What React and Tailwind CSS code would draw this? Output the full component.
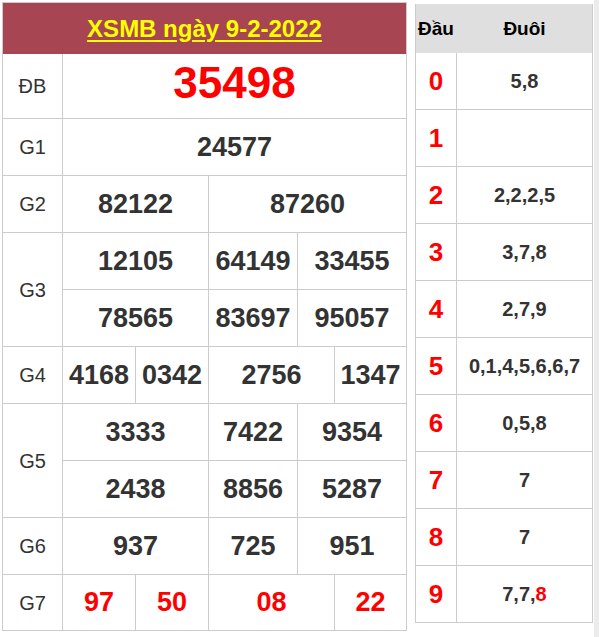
import React from "react";

const C = "bg-white flex items-center justify-center";
const NUM = "text-[27px] font-bold text-[#333] leading-none";
const RED = "text-[27px] font-bold text-[#ff0000] leading-none";
const RED_H = "text-[26px] font-bold text-[#ff0000] leading-none";
const LBL = "text-[20px] text-[#333] leading-none";

function Label({ children, className = "" }) {
  return (
    <div className={`${C} ${className}`}>
      <span className={LBL}>{children}</span>
    </div>
  );
}

function Num({ children, className = "", red = false }) {
  return (
    <div className={`${C} ${className}`}>
      <span className={red ? RED : NUM}>{children}</span>
    </div>
  );
}

const loto = [
  ["0", "5,8"],
  ["1", ""],
  ["2", "2,2,2,5"],
  ["3", "3,7,8"],
  ["4", "2,7,9"],
  ["5", "0,1,4,5,6,6,7"],
  ["6", "0,5,8"],
  ["7", "7"],
  ["8", "7"],
];

export default function App() {
  return (
    <div className="flex w-[599px] h-[637px] bg-white font-['Liberation_Sans',Arial,sans-serif]">
      {/* Left results table */}
      <div className="ml-[2px] mt-[2px] w-[405px] self-start border border-[#cccccc]">
        <div className="h-[51px] bg-[#a84552] flex items-center justify-center">
          <span className="text-[24px] font-bold text-[#ffff00] underline underline-offset-[3px] leading-none">
            XSMB ngày 9-2-2022
          </span>
        </div>
        <div className="grid grid-cols-[59px_72px_72px_88px_36px_71px] grid-rows-[64px_repeat(8,56px)_55px] gap-px bg-[#cccccc]">
          {/* ĐB */}
          <Label>ĐB</Label>
          <div className={`${C} col-span-5 pb-[6px]`}>
            <span className="text-[44px] font-bold text-[#ff0000] leading-none">35498</span>
          </div>
          {/* G1 */}
          <Label>G1</Label>
          <Num className="col-span-5">24577</Num>
          {/* G2 */}
          <Label>G2</Label>
          <Num className="col-span-2">82122</Num>
          <Num className="col-span-3">87260</Num>
          {/* G3 */}
          <Label className="row-span-2">G3</Label>
          <Num className="col-span-2">12105</Num>
          <Num>64149</Num>
          <Num className="col-span-2">33455</Num>
          <Num className="col-span-2">78565</Num>
          <Num>83697</Num>
          <Num className="col-span-2">95057</Num>
          {/* G4 */}
          <Label>G4</Label>
          <Num>4168</Num>
          <Num>0342</Num>
          <Num className="col-span-2">2756</Num>
          <Num>1347</Num>
          {/* G5 */}
          <Label className="row-span-2">G5</Label>
          <Num className="col-span-2">3333</Num>
          <Num>7422</Num>
          <Num className="col-span-2">9354</Num>
          <Num className="col-span-2">2438</Num>
          <Num>8856</Num>
          <Num className="col-span-2">5287</Num>
          {/* G6 */}
          <Label>G6</Label>
          <Num className="col-span-2">937</Num>
          <Num>725</Num>
          <Num className="col-span-2">951</Num>
          {/* G7 */}
          <Label>G7</Label>
          <Num red>97</Num>
          <Num red>50</Num>
          <Num red className="col-span-2">08</Num>
          <Num red>22</Num>
        </div>
      </div>

      {/* Right loto table */}
      <div className="ml-[8px] mt-[4px] w-[178px] self-start border-x border-b border-[#cccccc]">
        <div className="h-[49px] bg-[#dfdfdf] grid grid-cols-[40px_135px] gap-px items-center">
          <span className="text-center text-[19px] font-bold text-black leading-none">Đầu</span>
          <span className="text-center text-[19px] font-bold text-black leading-none">Đuôi</span>
        </div>
        <div className="grid grid-cols-[40px_135px] auto-rows-[56px] gap-px bg-[#cccccc]">
          {loto.map(([h, t]) => (
            <React.Fragment key={h}>
              <div className={C}>
                <span className={RED_H}>{h}</span>
              </div>
              <div className={C}>
                <span className="text-[20px] font-bold text-[#333] leading-none">{t}</span>
              </div>
            </React.Fragment>
          ))}
          <div className={C}>
            <span className={RED_H}>9</span>
          </div>
          <div className={C}>
            <span className="text-[20px] font-bold text-[#333] leading-none">
              7,7,<span className="text-[#ff0000]">8</span>
            </span>
          </div>
        </div>
      </div>

      {/* Right edge strip */}
      <div className="ml-px w-[6px] h-full bg-[#ececec]" />
    </div>
  );
}
